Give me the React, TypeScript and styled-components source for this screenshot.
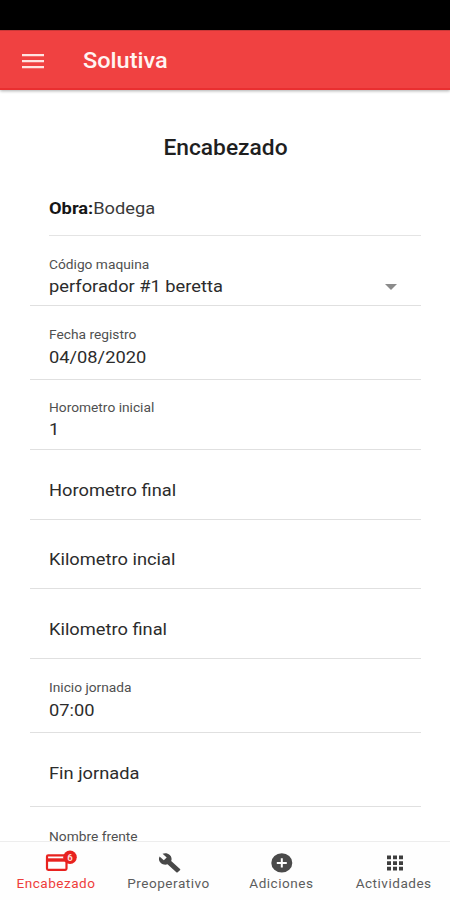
import React from "react";
import styled, { createGlobalStyle } from "styled-components";

const GlobalStyle = createGlobalStyle`
  * { box-sizing: border-box; }
  body { margin: 0; background: #fff; overflow: hidden; font-family: Roboto, "Liberation Sans", sans-serif; }
`;

const Screen = styled.div`
  width: 450px;
  height: 900px;
  display: flex;
  flex-direction: column;
  background: #fff;
  color: #1f1f1f;
  overflow: hidden;
`;

const StatusBar = styled.div`
  flex: 0 0 30px;
  background: #000;
`;

const Header = styled.header`
  flex: 0 0 60px;
  display: flex;
  align-items: center;
  gap: 39px;
  padding: 2px 0 0 22px;
  background: #f04141;
  border-top: 1px solid #c93838;
  border-bottom: 2px solid #e92f30;
  box-shadow: 0 1px 3px rgba(0, 0, 0, 0.32);
  z-index: 1;
`;

const MenuIcon = styled.svg`
  width: 22px;
  height: 16px;
  fill: #ffe3e0;
`;

const AppTitle = styled.h1`
  margin: 0;
  font-size: 22px;
  line-height: 30px;
  font-weight: 500;
  transform: scaleX(1.07);
  transform-origin: left;
  color: #fff4f2;
`;

const Content = styled.main`
  flex: 1 1 0;
  min-height: 0;
  overflow: hidden;
  padding: 0 29px 0 30px;
`;

const PageTitle = styled.h2`
  margin: 43px 0 0;
  height: 30px;
  text-align: center;
  font-size: 22px;
  line-height: 30px;
  font-weight: 500;
  transform: scaleX(1.035);
`;

const Summary = styled.div`
  margin: 19px 0 0 19px;
  height: 54px;
  padding-top: 14px;
  border-bottom: 1px solid #e4e4e4;
`;

const SummaryText = styled.p`
  margin: 0;
  width: max-content;
  font-size: 17px;
  line-height: 24px;
  transform: scaleX(1.075);
  transform-origin: left;
  color: #3a3a3a;
`;

const Strong = styled.strong`
  font-weight: 700;
  color: #161616;
`;

const Row = styled.div<{ $height: number }>`
  height: ${(p) => p.$height}px;
  display: flex;
  align-items: flex-end;
  justify-content: space-between;
  padding: 0 24px 0 19px;
  border-bottom: 1px solid #e0e0e0;
`;

const Field = styled.div<{ $bottom: number }>`
  display: flex;
  flex-direction: column;
  align-items: flex-start;
  padding-bottom: ${(p) => p.$bottom}px;
`;

const FieldLabel = styled.span`
  font-size: 12.5px;
  line-height: 16px;
  transform: scaleX(1.1);
  transform-origin: left;
  color: #505050;
`;

const FieldValue = styled.span<{ $gap?: number }>`
  margin-top: ${(p) => p.$gap ?? 0}px;
  font-size: 17px;
  line-height: 22px;
  transform: scaleX(1.075);
  transform-origin: left;
  color: #2c2c2c;
`;

const Caret = styled.svg`
  width: 12px;
  height: 6px;
  margin-bottom: 15px;
  fill: #8b8b8b;
`;

const TabBar = styled.nav`
  flex: 0 0 59px;
  display: grid;
  grid-template-columns: repeat(4, 1fr);
  background: #fefefe;
  border-top: 1px solid #ededed;
`;

const Tab = styled.div<{ $active?: boolean }>`
  display: flex;
  flex-direction: column;
  align-items: center;
  padding-top: 8px;
  color: ${(p) => (p.$active ? "#ee3d3b" : "#5c5c5c")};
`;

const TabIcon = styled.svg`
  display: block;
  height: 26px;
  overflow: visible;
`;

const TabLabel = styled.span`
  font-size: 12px;
  line-height: 16px;
  letter-spacing: 0.45px;
  transform: scaleX(1.13);
  white-space: nowrap;
`;

type FieldData = { label?: string; value: string; height: number; bottom: number; gap?: number; select?: boolean };

const fields: FieldData[] = [
  { label: "Código maquina", value: "perforador #1 beretta", height: 70, bottom: 8, gap: 2, select: true },
  { label: "Fecha registro", value: "04/08/2020", height: 74, bottom: 11, gap: 3 },
  { label: "Horometro inicial", value: "1", height: 70, bottom: 9, gap: 2 },
  { value: "Horometro final", height: 70, bottom: 18 },
  { value: "Kilometro incial", height: 69, bottom: 18 },
  { value: "Kilometro final", height: 70, bottom: 18 },
  { label: "Inicio jornada", value: "07:00", height: 74, bottom: 11, gap: 3 },
  { value: "Fin jornada", height: 74, bottom: 22 },
];

export default function App() {
  return (
    <>
      <GlobalStyle />
      <Screen>
        <StatusBar />
        <Header>
          <MenuIcon viewBox="0 0 22 16">
            <path d="M0 1h22v2.300H0zM0 7h22v2.300H0zM0 13h22v2.300H0z" />
          </MenuIcon>
          <AppTitle>Solutiva</AppTitle>
        </Header>
        <Content>
          <PageTitle>Encabezado</PageTitle>
          <Summary>
            <SummaryText>
              <Strong>Obra:</Strong>Bodega
            </SummaryText>
          </Summary>
          {fields.map((f) => (
            <Row key={f.value} $height={f.height}>
              <Field $bottom={f.bottom}>
                {f.label && <FieldLabel>{f.label}</FieldLabel>}
                <FieldValue $gap={f.gap}>{f.value}</FieldValue>
              </Field>
              {f.select && (
                <Caret viewBox="0 0 12 6">
                  <path d="M0 0h12L6 6z" />
                </Caret>
              )}
            </Row>
          ))}
          <Row $height={44}>
            <Field $bottom={5}>
              <FieldLabel>Nombre frente</FieldLabel>
            </Field>
          </Row>
        </Content>
        <TabBar>
          <Tab $active>
            <TabIcon width="34" viewBox="0 0 34 26">
              <rect x="8" y="5.300" width="19.500" height="14.500" rx="1.200" fill="none" stroke="#e8221f" strokeWidth="2.200" />
              <path d="M8 8.300h19.500v3.400H8z" fill="#e8221f" />
              <circle cx="31" cy="7.300" r="6.800" fill="#e8221f" />
              <text x="31" y="10.800" textAnchor="middle" fontSize="9.500" fontWeight="700" fill="#ffd9d6">6</text>
            </TabIcon>
            <TabLabel>Encabezado</TabLabel>
          </Tab>
          <Tab>
            <TabIcon width="24" viewBox="0 0 24 26">
              <path
                transform="translate(1 2.300) scale(.97 .88)"
                fill="#484848"
                d="M22.7 19l-9.1-9.1c.9-2.3.4-5-1.5-6.9-2-2-5-2.4-7.4-1.3L9 6 6 9 1.600 4.700C.4 7.100.9 10.100 2.900 12.100c1.900 1.900 4.600 2.400 6.900 1.500l9.100 9.100c.4.4 1 .4 1.400 0l2.300-2.300c.5-.4.5-1.100.1-1.400z"
              />
            </TabIcon>
            <TabLabel>Preoperativo</TabLabel>
          </Tab>
          <Tab>
            <TabIcon width="24" viewBox="0 0 24 26">
              <ellipse cx="12.800" cy="12.900" rx="10.500" ry="9.600" fill="#4a4a4a" />
              <path d="M7.800 12.900h10M12.800 8.200v9.400" stroke="#fff" strokeWidth="2" />
            </TabIcon>
            <TabLabel>Adiciones</TabLabel>
          </Tab>
          <Tab>
            <TabIcon width="24" viewBox="0 0 24 26">
              <path
                fill="#3e3e3e"
                d="M5 5.600h4v3.700H5zM11 5.600h4v3.700h-4zM17 5.600h4v3.700h-4zM5 11.200h4v3.700H5zM11 11.200h4v3.700h-4zM17 11.200h4v3.700h-4zM5 16.800h4v3.700H5zM11 16.800h4v3.700h-4zM17 16.800h4v3.700h-4z"
              />
            </TabIcon>
            <TabLabel>Actividades</TabLabel>
          </Tab>
        </TabBar>
      </Screen>
    </>
  );
}
